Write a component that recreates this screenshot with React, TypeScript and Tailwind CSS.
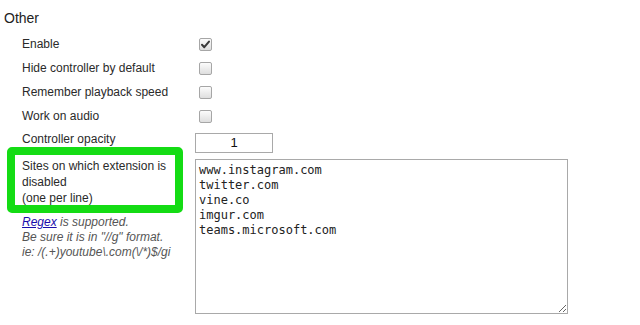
import React from "react";

function Box({ checked }: { checked?: boolean }) {
  return (
    <div className="ml-[4px] w-[13px] h-[13px] rounded-[2px] border border-[#a6a6a6] bg-gradient-to-b from-[#fcfcfc] to-[#dedede] flex items-center justify-center">
      {checked && (
        <svg width="11" height="11" viewBox="0 0 11 11">
          <path d="M2 5.8 L4.3 8.2 L9 2.6" fill="none" stroke="#3a3a3a" strokeWidth="2" strokeLinecap="round" strokeLinejoin="round" />
        </svg>
      )}
    </div>
  );
}

function Row({ label, checked }: { label: string; checked?: boolean }) {
  return (
    <div className="h-6 flex items-center pl-[22px]">
      <div className="w-[173px] leading-4">{label}</div>
      <Box checked={checked} />
    </div>
  );
}

export default function App() {
  return (
    <div
      className="relative w-[640px] h-[325px] bg-white text-[12px] text-[#2a2a2a] overflow-hidden"
      style={{ fontFamily: '"Liberation Sans", Arial, sans-serif' }}
    >
      <div className="h-[32px] pt-[10px] pl-[4px] text-[14px] leading-4 text-[#222]">Other</div>
      <Row label="Enable" checked />
      <Row label="Hide controller by default" />
      <Row label="Remember playback speed" />
      <Row label="Work on audio" />
      <div className="flex pl-[22px]">
        <div className="w-[173px] pt-[3px] leading-4">Controller opacity</div>
        <div className="mt-[5px] w-[78px] h-[20px] border border-[#a9a9a9] flex items-center justify-center text-[13px] text-[#111]">
          1
        </div>
      </div>
      <div className="flex pl-[22px] mt-[6px]">
        <div className="w-[173px]">
          <div className="leading-4 -mt-[1px]">
            Sites on which extension is
            <br />
            disabled
            <br />
            (one per line)
          </div>
          <div className="mt-[9px] italic leading-[15px] text-[#555]">
            <span className="text-[#1a0dab] underline">Regex</span> is supported.
            <br />
            Be sure it is in "//g" format.
            <br />
            ie: /(.+)youtube\.com(\/*)$/gi
          </div>
        </div>
        <textarea
          readOnly
          defaultValue={"www.instagram.com\ntwitter.com\nvine.co\nimgur.com\nteams.microsoft.com"}
          className="w-[373px] h-[155px] border border-[#a9a9a9] px-[3px] pt-[3px] text-[12px] leading-[15px] text-[#222] outline-none"
          style={{ fontFamily: '"DejaVu Sans Mono", "Liberation Mono", monospace' }}
        />
      </div>
      <div className="absolute left-[7px] top-[147px] w-[176px] h-[66px] border-[8px] border-[#14dc14] rounded-[5px] pointer-events-none" />
    </div>
  );
}
